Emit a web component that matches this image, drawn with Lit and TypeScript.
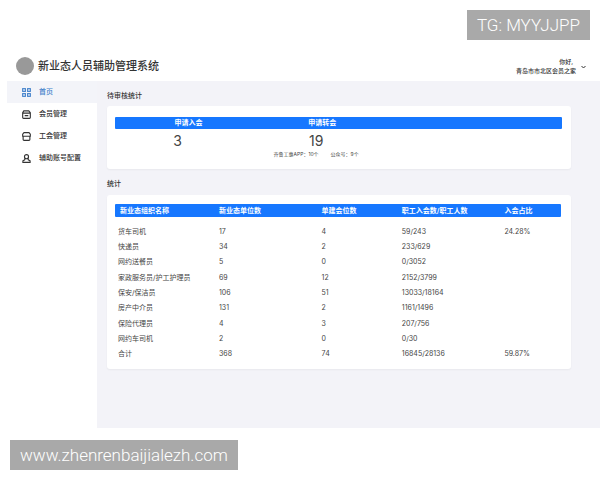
import { LitElement, html, css, svg } from "lit";
import { customElement } from "lit/decorators.js";

const icons = {
  home: svg`<rect x="1.5" y="1.5" width="6" height="6"/><rect x="12.5" y="1.5" width="6" height="6"/><rect x="1.5" y="12.5" width="6" height="6"/><rect x="12.5" y="12.5" width="6" height="6"/>`,
  member: svg`<path d="M4 2H15L18.500 6V16.500A2 2 0 0 1 16.500 18.500H3.500A2 2 0 0 1 1.500 16.500V6ZM1.500 7H18.500M6 12.500H14"/>`,
  union: svg`<path d="M4.500 1.500H15.500L18.500 5V9.500H1.500V5ZM2.500 9.500V16.500A2 2 0 0 0 4.500 18.500H15.500A2 2 0 0 0 17.500 16.500V9.500"/>`,
  account: svg`<circle cx="10" cy="6" r="4.500"/><path d="M6.500 9.500 6 13 2 15V18.500H18V15L14 13 13.500 9.500"/>`,
};

const menu = [
  { label: "首页", icon: icons.home, active: true },
  { label: "会员管理", icon: icons.member },
  { label: "工会管理", icon: icons.union },
  { label: "辅助账号配置", icon: icons.account },
];

const columns = ["新业态组织名称", "新业态单位数", "单建会位数", "职工入会数/职工人数", "入会占比"];

const rows = [
  ["货车司机", "17", "4", "59/243", "24.28%"],
  ["快递员", "34", "2", "233/629", ""],
  ["网约送餐员", "5", "0", "0/3052", ""],
  ["家政服务员/护工护理员", "69", "12", "2152/3799", ""],
  ["保安/保洁员", "106", "51", "13033/18164", ""],
  ["房产中介员", "131", "2", "1161/1496", ""],
  ["保险代理员", "4", "3", "207/756", ""],
  ["网约车司机", "2", "0", "0/30", ""],
  ["合计", "368", "74", "16845/28136", "59.87%"],
];

@customElement("app-root")
export class AppRoot extends LitElement {
  static styles = css`
    :host {
      display: block;
      background: #fff;
      color: #444;
      font: 7px/10px Inter, "Noto Sans CJK SC", sans-serif;
    }
    * { box-sizing: border-box; }
    .banner { display: flex; padding: 10px; }
    .banner.top { justify-content: flex-end; }
    .banner.bottom { padding-top: 12px; }
    .tag {
      padding: 0 10px;
      background: #a9a9a9;
      color: #fff;
      font: 300 17px/30px Roboto, "Liberation Sans", sans-serif;
      text-decoration: none;
      white-space: nowrap;
    }
    header {
      display: flex;
      align-items: center;
      gap: 4px;
      height: 31px;
      padding: 0 14px 0 16px;
    }
    .logo { width: 18px; height: 18px; border-radius: 50%; background: #999; }
    h1 { flex: 1; margin: 0; color: #333; font-size: 11px; line-height: 16px; font-weight: 500; }
    .user {
      display: flex;
      align-items: flex-end;
      gap: 5px;
      padding: 0;
      border: 0;
      background: none;
      color: #333;
      font: 500 6px/9px Inter, "Noto Sans CJK SC", sans-serif;
      text-align: right;
    }
    .user svg { width: 5px; height: 12px; }
    .greeting { display: block; padding-right: 3px; }
    svg { fill: none; stroke: currentColor; stroke-width: 2; flex: none; }
    .body { display: flex; padding-left: 7px; }
    nav { flex: none; width: 90px; }
    nav a {
      display: flex;
      align-items: center;
      gap: 8px;
      height: 22px;
      padding-left: 15px;
      color: #333;
      font-weight: 500;
      text-decoration: none;
    }
    nav a.active { background: #f3f4f9; color: #3f7fca; }
    nav svg { width: 9px; height: 9px; stroke-width: 2.5; }
    main { flex: 1; min-width: 0; padding: 10px 29px 59px 10px; background: #f3f3f8; }
    h2 { margin: 0; color: #333; font-size: 7px; line-height: 10px; font-weight: 500; }
    .card { background: #fff; border-radius: 3px; box-shadow: 0 1px 2px #0000000c; }
    .pending { margin: 5px 0 10px; padding: 11px 9px 8px 8px; }
    .stats { margin-top: 6px; padding: 9px 10px 7px 8px; }
    table { width: 100%; border-collapse: separate; border-spacing: 0; table-layout: fixed; }
    th, td { padding: 0; white-space: nowrap; }
    th { height: 12px; background: #1677ff; color: #fff; font-weight: 600; }
    th:first-child { border-radius: 1px 0 0 1px; }
    th:last-child { border-radius: 0 1px 1px 0; }
    .pending th:nth-child(1) { width: 28%; padding-left: 22px; }
    .pending th:nth-child(2) { width: 34%; padding-left: 12px; }
    .pending td { height: 32px; padding-top: 4px; text-align: center; vertical-align: top; }
    .count { display: block; font-size: 14px; line-height: 16px; }
    .sources { display: flex; justify-content: center; gap: 12px; font-size: 5px; line-height: 10px; }
    .stats th { height: 13px; text-align: left; }
    .stats th:nth-child(1) { width: 104px; padding-left: 5px; }
    .stats th:nth-child(2) { width: 23%; }
    .stats th:nth-child(3) { width: 18%; }
    .stats th:nth-child(4) { width: 23%; }
    .stats td { height: 15px; }
    .stats tr:nth-child(3n) td { height: 16px; }
    .stats td:first-child { padding-left: 3px; }
    .stats tbody tr:first-child td { height: 22px; padding-top: 7px; }
  `;

  render() {
    return html`
      <div class="banner top"><span class="tag">TG: MYYJJPP</span></div>
      <header>
        <span class="logo"></span>
        <h1>新业态人员辅助管理系统</h1>
        <button class="user" type="button">
          <span><span class="greeting">你好,</span>青岛市市北区会员之家</span>
          <svg viewBox="0 0 10 24" aria-hidden="true"><path d="M1 6 5 10 9 6" /></svg>
        </button>
      </header>
      <div class="body">
        <nav>
          ${menu.map(
            (m) => html`<a href="#" class=${m.active ? "active" : ""}>
              <svg viewBox="0 0 20 20" aria-hidden="true">${m.icon}</svg>${m.label}
            </a>`,
          )}
        </nav>
        <main>
          <h2>待审核统计</h2>
          <section class="card pending">
            <table>
              <thead><tr><th>申请入会</th><th>申请转会</th><th></th></tr></thead>
              <tbody>
                <tr>
                  <td><span class="count">3</span></td>
                  <td>
                    <span class="count">19</span>
                    <span class="sources"><span>齐鲁工惠APP：10个</span><span>公众号：9个</span></span>
                  </td>
                  <td></td>
                </tr>
              </tbody>
            </table>
          </section>
          <h2>统计</h2>
          <section class="card stats">
            <table>
              <thead><tr>${columns.map((c) => html`<th>${c}</th>`)}</tr></thead>
              <tbody>
                ${rows.map((r) => html`<tr>${r.map((v) => html`<td>${v}</td>`)}</tr>`)}
              </tbody>
            </table>
          </section>
        </main>
      </div>
      <div class="banner bottom"><a class="tag" href="#">www.zhenrenbaijialezh.com</a></div>
    `;
  }
}
